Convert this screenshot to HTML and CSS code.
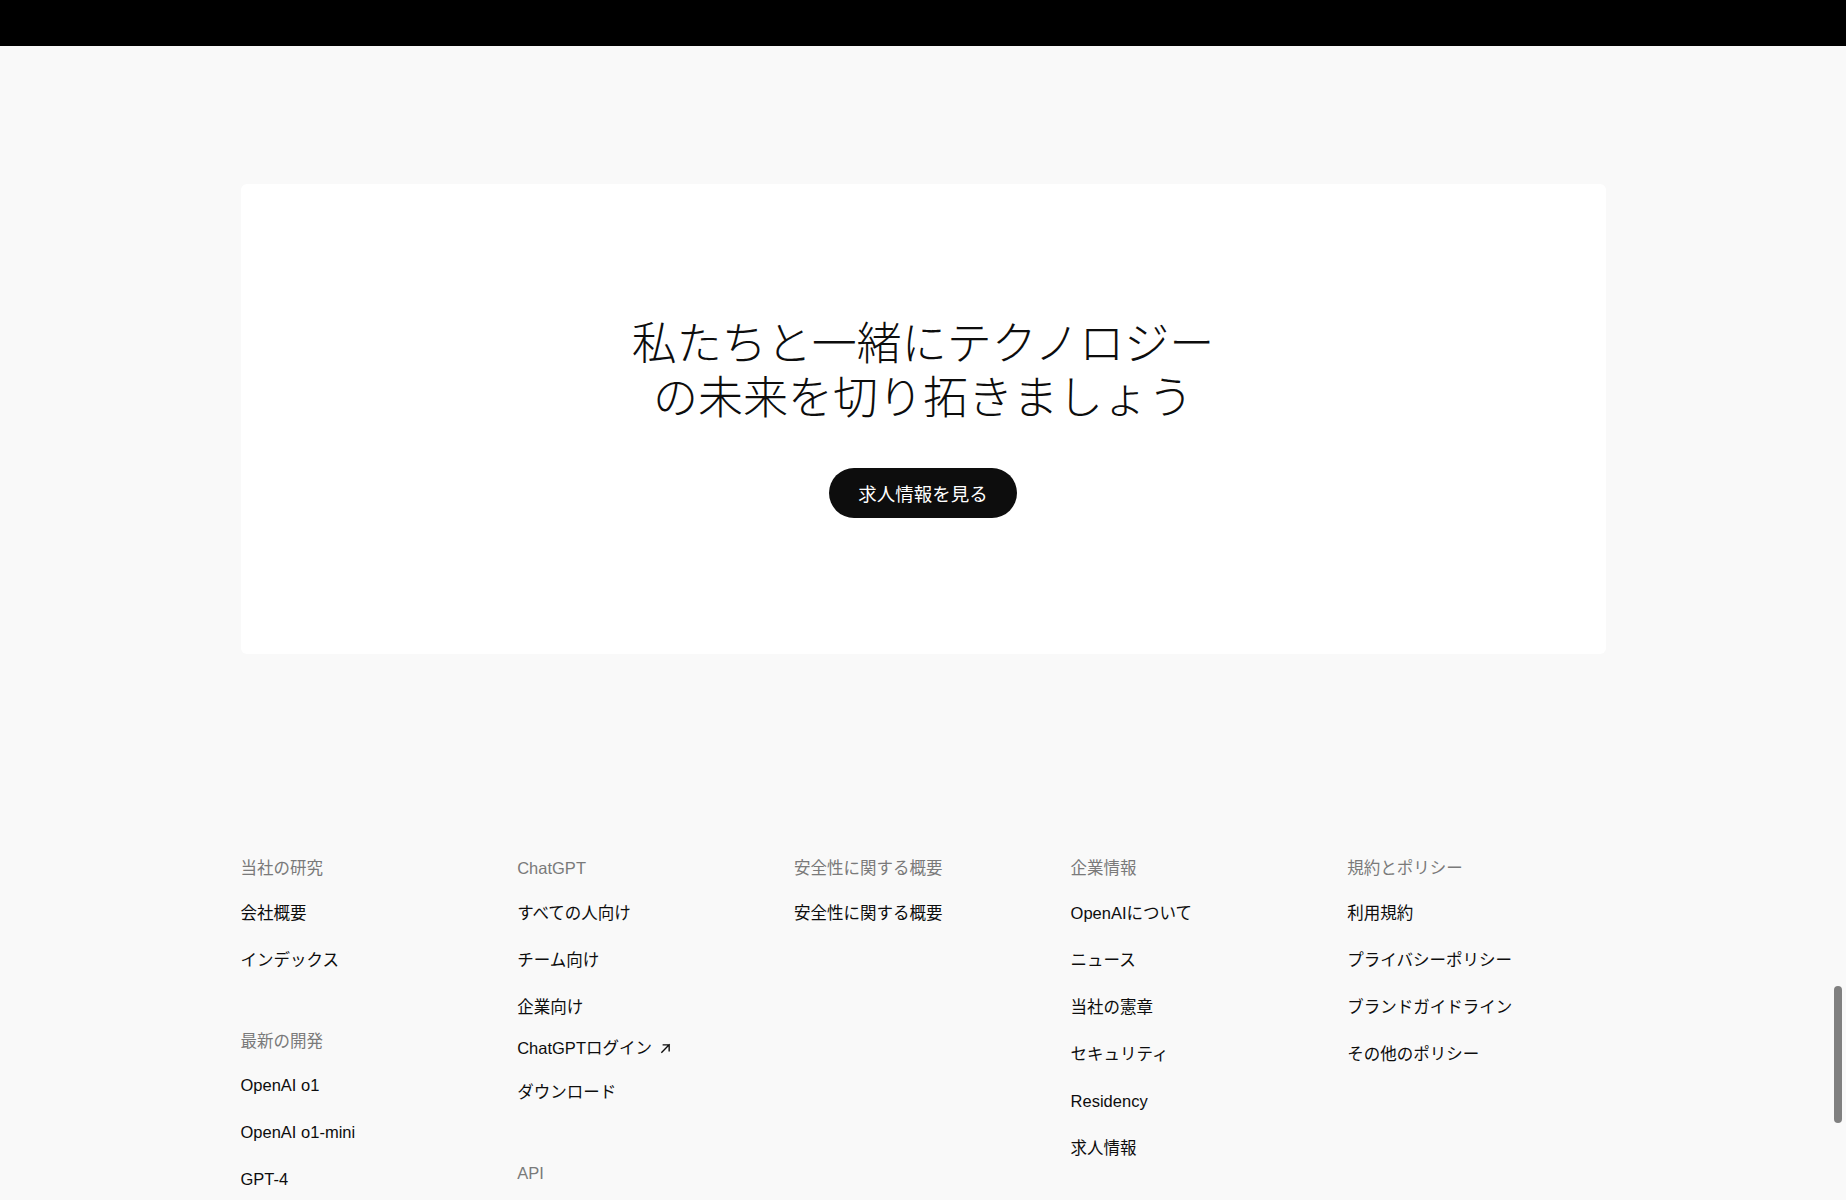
FILE: index.html
```html
<!DOCTYPE html>
<html lang="ja">
<head>
<meta charset="utf-8">
<title>OpenAI</title>
<link rel="stylesheet" href="styles.css">
</head>
<body>
<div class="topbar"></div>
<main class="main">
  <section class="cta-card">
    <h2 class="cta-title">私たちと一緒にテクノロジー<br>の未来を切り拓きましょう</h2>
    <a class="cta-button" href="#">求人情報を見る</a>
  </section>

  <footer class="footer">
    <div class="footer-col">
      <div class="footer-group">
        <div class="footer-heading">当社の研究</div>
        <ul class="footer-list">
          <li><a href="#">会社概要</a></li>
          <li><a href="#">インデックス</a></li>
        </ul>
      </div>
      <div class="footer-group">
        <div class="footer-heading">最新の開発</div>
        <ul class="footer-list">
          <li><a href="#">OpenAI o1</a></li>
          <li><a href="#">OpenAI o1-mini</a></li>
          <li><a href="#">GPT-4</a></li>
        </ul>
      </div>
    </div>

    <div class="footer-col">
      <div class="footer-group">
        <div class="footer-heading">ChatGPT</div>
        <ul class="footer-list">
          <li><a href="#">すべての人向け</a></li>
          <li><a href="#">チーム向け</a></li>
          <li><a href="#">企業向け</a></li>
          <li class="login"><a href="#">ChatGPTログイン<svg class="ext-icon" viewBox="0 0 12 12" width="11" height="11" aria-hidden="true"><path d="M2 10 L10 2 M3.6 2 H10 V8.4" fill="none" stroke="currentColor" stroke-width="1.5" stroke-linecap="square"/></svg></a></li>
          <li class="after-login"><a href="#">ダウンロード</a></li>
        </ul>
      </div>
      <div class="footer-group">
        <div class="footer-heading">API</div>
      </div>
    </div>

    <div class="footer-col">
      <div class="footer-group">
        <div class="footer-heading">安全性に関する概要</div>
        <ul class="footer-list">
          <li><a href="#">安全性に関する概要</a></li>
        </ul>
      </div>
    </div>

    <div class="footer-col">
      <div class="footer-group">
        <div class="footer-heading">企業情報</div>
        <ul class="footer-list">
          <li><a href="#">OpenAIについて</a></li>
          <li><a href="#">ニュース</a></li>
          <li><a href="#">当社の憲章</a></li>
          <li><a href="#">セキュリティ</a></li>
          <li><a href="#">Residency</a></li>
          <li><a href="#">求人情報</a></li>
        </ul>
      </div>
    </div>

    <div class="footer-col">
      <div class="footer-group">
        <div class="footer-heading">規約とポリシー</div>
        <ul class="footer-list">
          <li><a href="#">利用規約</a></li>
          <li><a href="#">プライバシーポリシー</a></li>
          <li><a href="#">ブランドガイドライン</a></li>
          <li><a href="#">その他のポリシー</a></li>
        </ul>
      </div>
    </div>
  </footer>
</main>
<div class="scroll-thumb"></div>
</body>
</html>
```

FILE: styles.css
```css
* {
  box-sizing: border-box;
}

html, body {
  margin: 0;
  padding: 0;
}

body {
  background: #f9f9f9;
  color: #0d0d0d;
  font-family: "Liberation Sans", "Noto Sans CJK JP", sans-serif;
  -webkit-font-smoothing: antialiased;
}

.topbar {
  height: 46px;
  background: #000;
}

.main {
  width: 1365px;
  margin: 0 auto;
  padding-top: 138px;
}

.cta-card {
  height: 470px;
  padding-top: 130px;
  background: #fff;
  border-radius: 6px;
  display: flex;
  flex-direction: column;
  align-items: center;
  justify-content: flex-start;
  gap: 46px;
}

.cta-title {
  margin: 0;
  font-family: "Noto Sans CJK JP", sans-serif;
  font-weight: 300;
  font-size: 45px;
  line-height: 54px;
  text-align: center;
  color: #0d0d0d;
}

.cta-button {
  display: inline-flex;
  align-items: center;
  justify-content: center;
  height: 50px;
  padding: 0 29px;
  border-radius: 25px;
  background: #0d0d0d;
  color: #fff;
  text-decoration: none;
  font-family: "Noto Sans CJK JP", sans-serif;
  font-size: 18.5px;
  font-weight: 400;
}

.footer {
  display: grid;
  grid-template-columns: repeat(5, 1fr);
  column-gap: 18.5px;
  padding-top: 202px;
  padding-bottom: 4px;
}

.footer-col {
  display: flex;
  flex-direction: column;
  gap: 57px;
}

.footer-heading {
  font-size: 16.5px;
  line-height: 24px;
  color: #7a7a7a;
  margin-bottom: 20.5px;
}

.footer-list {
  list-style: none;
  margin: 0;
  padding: 0;
  display: flex;
  flex-direction: column;
  gap: 23px;
}

.footer-list li {
  font-size: 16.5px;
  line-height: 24px;
}

.footer-list a {
  color: #0d0d0d;
  text-decoration: none;
  display: inline-flex;
  align-items: center;
}

.footer-list .login {
  margin-top: -6px;
}

.footer-list .after-login {
  margin-top: -2.5px;
}

.ext-icon {
  margin-left: 8px;
  margin-top: 1px;
}

.scroll-thumb {
  position: fixed;
  right: 4px;
  top: 986px;
  width: 8px;
  height: 137px;
  border-radius: 4px;
  background: #808080;
}
```
